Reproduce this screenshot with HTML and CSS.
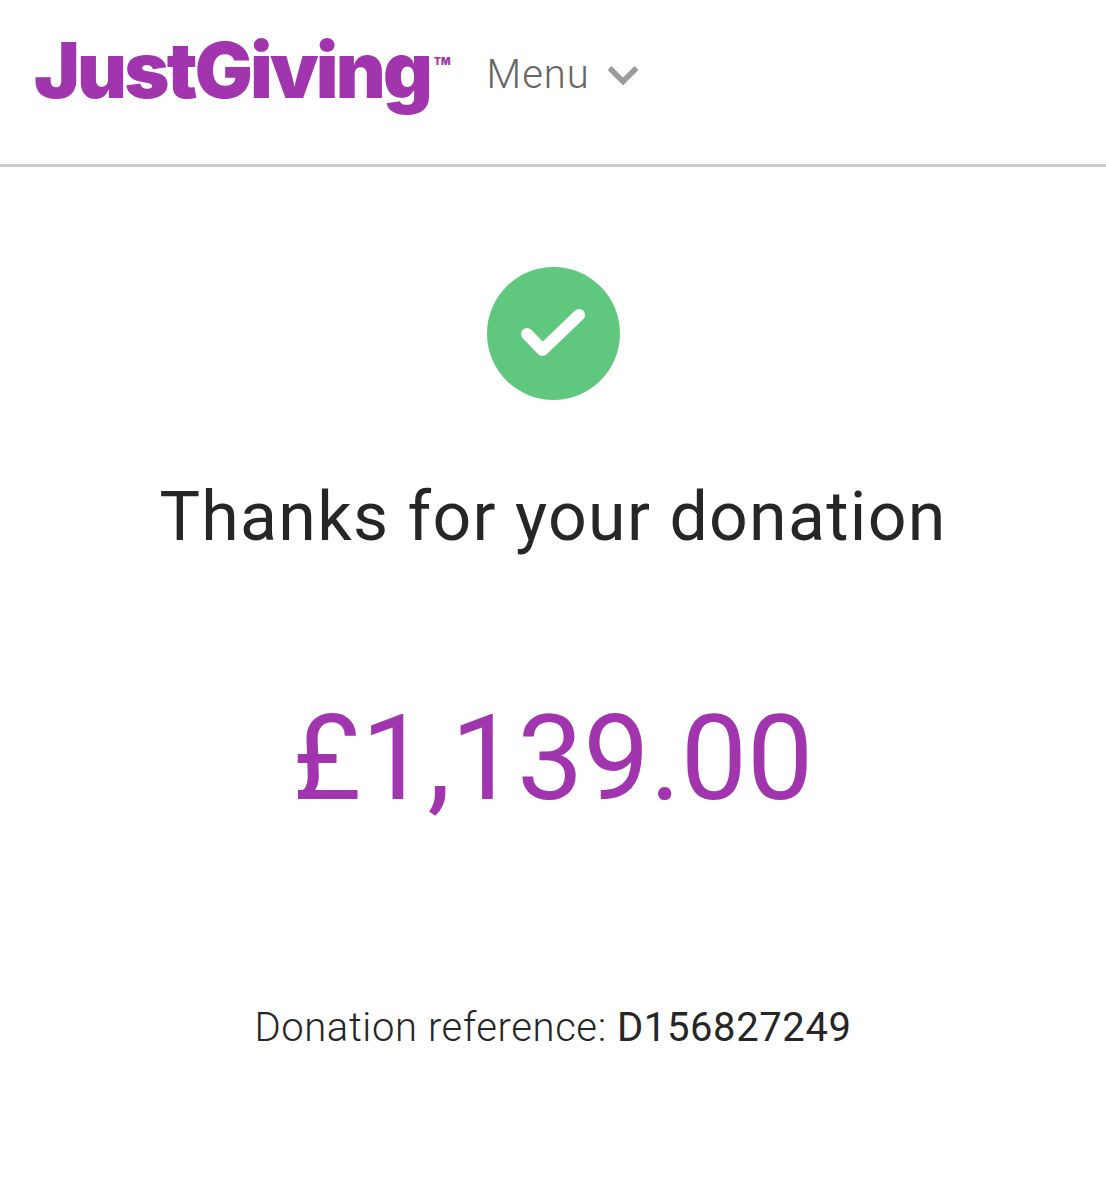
FILE: index.html
```html
<!doctype html>
<html lang="en">
    <head>
        <meta charset="UTF-8" />
        <meta name="viewport" content="width=device-width, initial-scale=1" />
        <link rel="stylesheet" href="styles.css">
        <title>JustGiving</title>
    </head>
    <body>
        <header class="site-header">
            <div class="logo">JustGiving<span class="logo-tm">TM</span></div>
            <div class="menu">
                <span>Menu</span>
                <svg class="menu-chevron" viewBox="0 0 32 20" width="32" height="20" aria-hidden="true">
                    <path d="M2.5 3 L16 16.5 L29.5 3" fill="none" stroke="#9b9b9b" stroke-width="5.5" />
                </svg>
            </div>
        </header>
        <main class="confirmation">
            <div class="tick">
                <svg viewBox="0 0 64 50" width="64" height="50" aria-hidden="true">
                    <path d="M6 25 L21.5 41 L58 6" fill="none" stroke="#fff" stroke-width="12" stroke-linecap="round" stroke-linejoin="round" />
                </svg>
            </div>
            <h1 class="thanks">Thanks for your donation</h1>
            <p class="amount">£1,139.00</p>
            <p class="reference">Donation reference: <span class="reference-code">D156827249</span></p>
        </main>
    </body>
</html>
```

FILE: styles.css
```css
body,
html,
h1,
p {
    padding: 0;
    margin: 0;
}
body {
    font-family: Roboto, "Liberation Sans", sans-serif;
    background-color: #ffffff;
    color: #262626;
}

/* -- HEADER -- */

.site-header {
    display: flex;
    align-items: flex-start;
    height: 164px;
    padding-left: 34px;
    border-bottom: 3px solid #cccccc;
}
.logo {
    display: flex;
    align-items: flex-start;
    margin-top: 24px;
    font-family: Inter, sans-serif;
    font-weight: 900;
    font-size: 77px;
    line-height: 92px;
    letter-spacing: -2.8px;
    color: #a035ae;
}
.logo-tm {
    margin: 32px 0 0 4px;
    font-size: 10px;
    line-height: 11px;
    letter-spacing: 0;
}
.menu {
    display: flex;
    align-items: center;
    gap: 17px;
    margin: 51px 0 0 36px;
    font-size: 40px;
    font-weight: 300;
    line-height: 48px;
    letter-spacing: 1px;
    color: #666666;
}

/* -- CONFIRMATION -- */

.confirmation {
    display: flex;
    flex-direction: column;
    align-items: center;
    padding-top: 100px;
}
.tick {
    display: flex;
    align-items: center;
    justify-content: center;
    width: 133px;
    height: 133px;
    border-radius: 50%;
    background-color: #60c77f;
}
.thanks {
    margin-top: 76px;
    font-size: 68px;
    font-weight: 400;
    line-height: 82px;
    letter-spacing: 1.3px;
    white-space: nowrap;
}
.amount {
    margin-top: 131px;
    font-size: 118px;
    font-weight: 400;
    line-height: 140px;
    color: #a035ae;
}
.reference {
    margin-top: 175px;
    font-size: 40px;
    font-weight: 300;
    line-height: 48px;
    letter-spacing: 0.6px;
}
.reference-code {
    font-weight: 400;
}
```
